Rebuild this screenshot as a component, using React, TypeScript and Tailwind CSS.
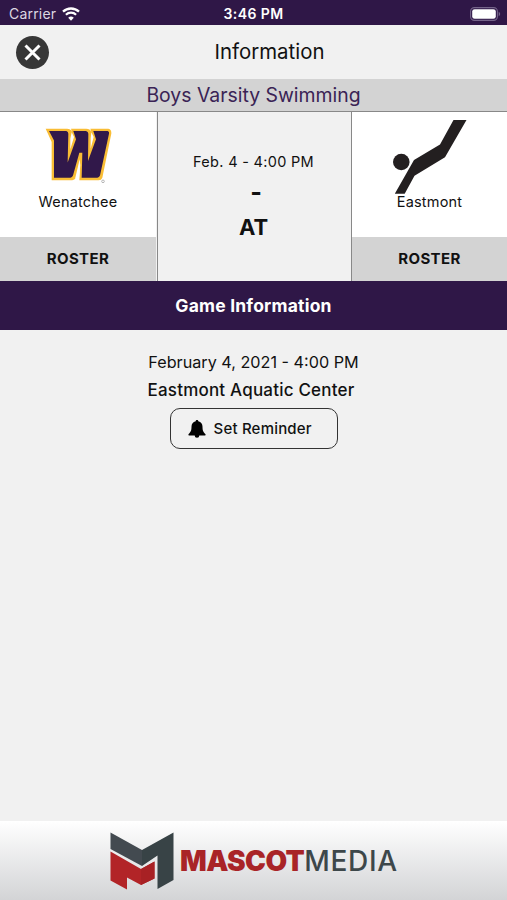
import type { ReactNode } from "react";

type TeamProps = {
  name: string;
  children: ReactNode;
};

function Wifi() {
  return (
    <svg width="18" height="14" viewBox="0 0 18 14" fill="none" className="ml-[6px]">
      <path d="M1 4.7a11.6 11.6 0 0 1 16 0" stroke="white" strokeWidth="2.3" />
      <path d="M3.9 7.8a7.3 7.3 0 0 1 10.2 0" stroke="white" strokeWidth="2.2" />
      <path d="M9 13.8 6.2 10.8a4 4 0 0 1 5.6 0z" fill="white" />
    </svg>
  );
}

function Battery() {
  return (
    <svg width="31" height="14" viewBox="0 0 31 14">
      <rect x="0.6" y="0.6" width="26.8" height="12.8" rx="3.8" fill="none" stroke="#75648a" strokeWidth="1.1" />
      <rect x="2.2" y="2.2" width="23.6" height="9.6" rx="2.4" fill="white" />
      <path d="M28.7 4.8c2 .8 2 3.6 0 4.4z" fill="#75648a" />
    </svg>
  );
}

function WenatcheeLogo() {
  return (
    <svg width="80" height="70" viewBox="0 0 240 210">
      <g transform="translate(7 -3) scale(1 1.08)">
        <path
          d="M16 27H80Q91 27 95 36L92 27H138Q149 27 153 36L150 27H204Q214 29 213 40L186 163Q183 170 175 170H117L119 137 106 164Q103 170 96 170H34L34 64z"
          fill="#f9bd35"
        />
        <path d="M94 37 101 50 90 84 90 55zM153 37 160 50 151 82 151 54z" fill="white" />
        <path d="M118 112 120 128 116 165 109 169 105 163z" fill="white" />
        <path
          d="M26 33H78Q84 34 84 41L82 121 107 56 99 33H137Q144 34 144 41L143 117 167 56 159 33H202Q208 34 206 41L179 157Q177 163 171 163H124L126 94H117L98 157Q96 163 90 163H41L41 60z"
          fill="#31184a"
        />
      </g>
      <circle cx="195" cy="184" r="4" fill="none" stroke="#999" strokeWidth="2" />
    </svg>
  );
}

function EastmontLogo() {
  return (
    <svg width="74" height="74" viewBox="0 0 74 74" fill="#231f20">
      <circle cx="8.3" cy="42" r="8.3" />
      <path d="M60.5 0H73.5L52 37.3 21.5 55.7 11.7 73.7H1.8L21 40 47 24.5z" />
    </svg>
  );
}

function MascotMark() {
  return (
    <svg width="64" height="58" viewBox="0 0 64 58">
      <path d="M.5.5 32 18V34L.5 17z" fill="#434a50" />
      <path d="M32 18 63.5.5V48L47.5 57V23.5L32 34z" fill="#384346" />
      <path d="M.5 19.5 31 37 44.5 29.5V46.5L31 53 17 45.5V57.5L.5 48.5z" fill="#b22427" />
      <path d="M31 37 44.5 29.5V46.5L31 53z" fill="#a82124" />
    </svg>
  );
}

function Team({ name, children }: TeamProps) {
  return (
    <div className="flex flex-col bg-white">
      <div className="flex h-[125px] flex-col items-center">
        <div className="h-[81px] pt-2">{children}</div>
        <div className="text-[14.5px] leading-[18px] tracking-[0.2px]">{name}</div>
      </div>
      <button className="h-11 bg-[#d3d3d3] text-[15px] font-bold tracking-[0.35px]">ROSTER</button>
    </div>
  );
}

export default function App() {
  return (
    <div className="flex h-[900px] w-full flex-col overflow-hidden bg-[#f1f1f1] font-['Inter',sans-serif] text-[#111]">
      <div className="grid h-[25px] shrink-0 grid-cols-3 items-center bg-[#2f1747] pt-[2px] text-white">
        <div className="flex items-center pl-[9px] text-[14px] text-[#ddd7e2]">
          <span className="tracking-[0.2px]">Carrier</span>
          <Wifi />
        </div>
        <div className="text-center text-[14px] font-semibold tracking-[0.4px]">3:46 PM</div>
        <div className="flex justify-end pr-[6px]">
          <Battery />
        </div>
      </div>

      <header className="grid h-[54px] shrink-0 grid-cols-[1fr_auto_1fr] items-center">
        <div className="pl-4">
          <button className="flex size-[33px] items-center justify-center rounded-full bg-[#373737]">
            <svg width="17" height="17" viewBox="0 0 17 17" stroke="white" strokeWidth="3">
              <path d="M1.5 1.5l14 14M15.5 1.5l-14 14" />
            </svg>
          </button>
        </div>
        <h1 className="pl-8 text-[20.4px]">Information</h1>
      </header>

      <div className="h-[33px] shrink-0 border-b-[1.5px] border-[#888] bg-[#d3d3d3] text-center text-[19.4px] leading-[33px] text-[#3a2355]">
        Boys Varsity Swimming
      </div>

      <div className="grid h-[169px] shrink-0 grid-cols-[156px_196px_155px]">
        <Team name="Wenatchee">
          <WenatcheeLogo />
        </Team>
        <div className="ml-px flex flex-col items-center border-r border-l border-[#888] pt-[40px] pr-[2px]">
          <div className="text-[14.5px] leading-5 tracking-[0.3px]">Feb. 4 - 4:00 PM</div>
          <div className="mt-[3px] pl-[5px] text-[25px] leading-[35px] font-bold">-</div>
          <div className="text-[22px] leading-[35px] font-bold">AT</div>
        </div>
        <Team name="Eastmont">
          <EastmontLogo />
        </Team>
      </div>

      <h2 className="h-[49px] shrink-0 bg-[#2f1747] text-center text-[17.5px] leading-[49px] font-bold tracking-[0.2px] text-white">
        Game Information
      </h2>

      <main className="flex flex-1 flex-col items-center pt-[18px]">
        <p className="text-[16.2px] leading-7">February 4, 2021 - 4:00 PM</p>
        <p className="pr-[5px] text-[17px] leading-7 font-medium tracking-[0.2px]">Eastmont Aquatic Center</p>
        <button className="mt-1 flex h-[41px] w-[168px] items-center rounded-[10px] border-[1.5px] border-[#333] pl-[17px] text-[15px] font-medium tracking-[0.2px]">
          <svg width="18" height="18" viewBox="0 0 18 18" fill="black">
            <path d="M9 0c.8 0 1.3.5 1.3 1.2 2.8.7 4.2 2.8 4.2 5.5 0 4 .8 5 2.8 7.3.7.8.2 1.6-.7 1.6H1.4c-.9 0-1.4-.8-.7-1.6 2-2.3 2.8-3.3 2.8-7.3 0-2.7 1.4-4.8 4.2-5.5C7.7.5 8.2 0 9 0zM6.7 15.6h4.6a2.3 2.2 0 0 1-4.6 0z" />
          </svg>
          <span className="ml-2 pt-[2px]">Set Reminder</span>
        </button>
      </main>

      <footer className="flex h-[79px] shrink-0 items-center bg-linear-to-b from-white to-[#d3d4d6] pl-[110px]">
        <MascotMark />
        <div className="ml-[6px] text-[28px] whitespace-nowrap">
          <span className="font-black tracking-[-0.6px] text-[#a92427]">MASCOT</span>
          <span className="font-medium tracking-[0.7px] text-[#3d474a]">MEDIA</span>
        </div>
      </footer>
    </div>
  );
}
